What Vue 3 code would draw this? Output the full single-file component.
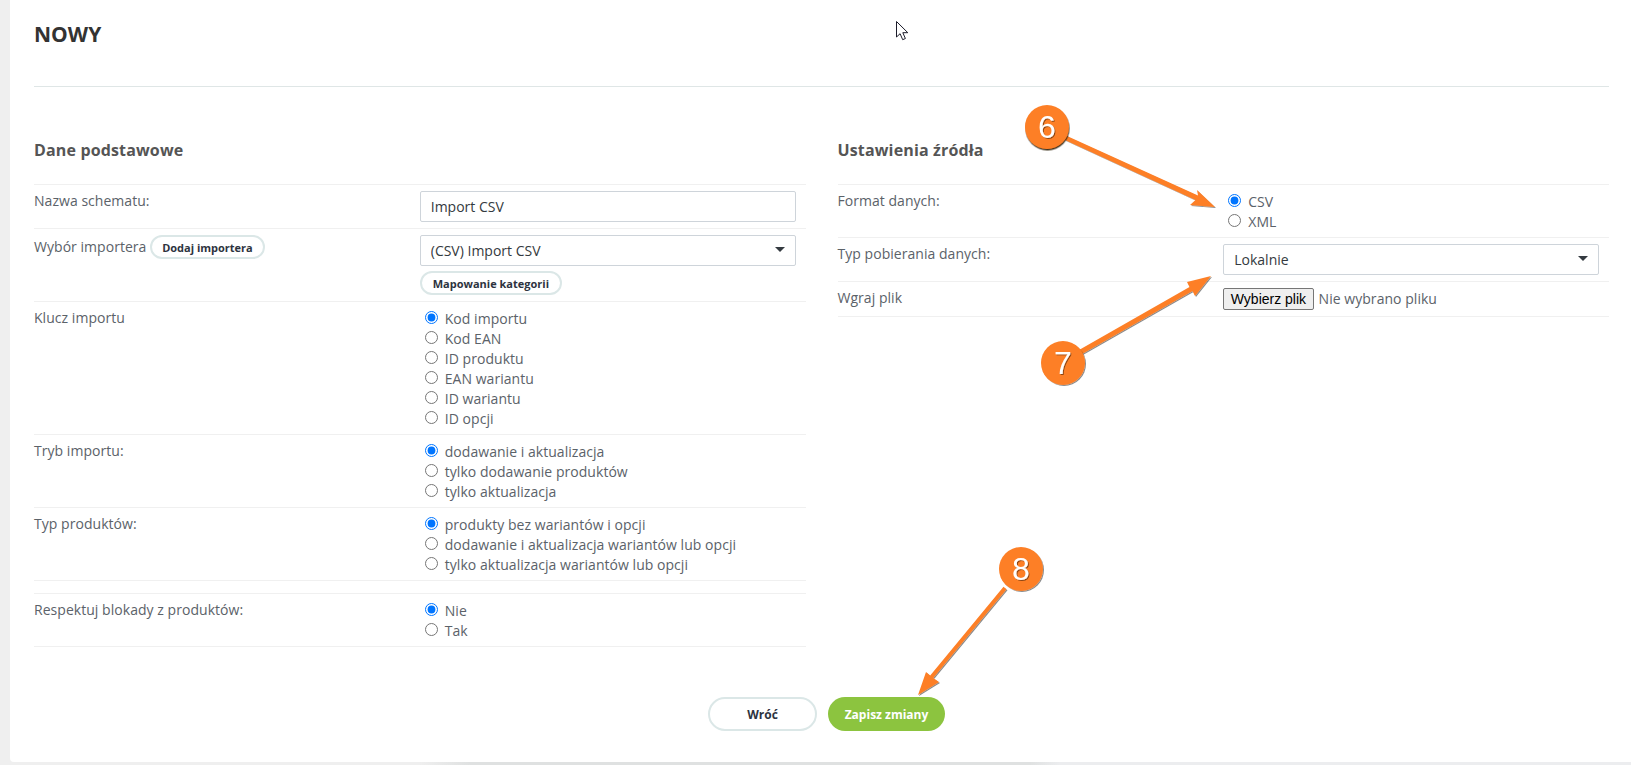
<template>
  <div class="page">
    <main class="card">
      <h1 class="title">NOWY</h1>

      <div class="columns">
        <section>
          <h2>Dane podstawowe</h2>
          <div class="row">
            <div class="label">Nazwa schematu:</div>
            <div class="control"><input class="field" type="text" value="Import CSV" /></div>
          </div>
          <div class="row">
            <div class="label">Wybór importera <button class="pill pill-inline">Dodaj importera</button></div>
            <div class="control">
              <div class="select-wrap"><select class="field"><option>(CSV) Import CSV</option></select></div>
              <button class="pill pill-below">Mapowanie kategorii</button>
            </div>
          </div>
          <div v-for="group in leftGroups" :key="group.name" class="row">
            <div class="label">{{ group.label }}</div>
            <div class="control">
              <label v-for="(opt, i) in group.options" :key="opt" class="radio">
                <input type="radio" :name="group.name" :checked="i === 0" />
                <span>{{ opt }}</span>
              </label>
            </div>
          </div>
          <div class="row"></div>
          <div class="row">
            <div class="label">Respektuj blokady z produktów:</div>
            <div class="control">
              <label class="radio"><input type="radio" name="blokady" checked /><span>Nie</span></label>
              <label class="radio"><input type="radio" name="blokady" /><span>Tak</span></label>
            </div>
          </div>
        </section>

        <section>
          <h2>Ustawienia źródła</h2>
          <div class="row">
            <div class="label">Format danych:</div>
            <div class="control">
              <label class="radio"><input type="radio" name="format" checked /><span>CSV</span></label>
              <label class="radio"><input type="radio" name="format" /><span>XML</span></label>
            </div>
          </div>
          <div class="row">
            <div class="label">Typ pobierania danych:</div>
            <div class="control">
              <div class="select-wrap"><select class="field"><option>Lokalnie</option></select></div>
            </div>
          </div>
          <div class="row">
            <div class="label">Wgraj plik</div>
            <div class="control file">
              <button class="file-btn">Wybierz plik</button>
              <span>Nie wybrano pliku</span>
            </div>
          </div>
        </section>
      </div>

      <div class="actions">
        <button class="btn btn-back">Wróć</button>
        <button class="btn btn-save">Zapisz zmiany</button>
      </div>
    </main>

    <!-- annotations drawn on top of the screenshot -->
    <svg class="overlay" width="1631" height="765" viewBox="0 0 1631 765">
      <defs>
        <filter id="soft" x="-20%" y="-20%" width="140%" height="140%">
          <feDropShadow dx="1" dy="1" stdDeviation="0.6" flood-color="#000" flood-opacity="0.45" />
        </filter>
        <filter id="dark" x="-20%" y="-20%" width="140%" height="140%">
          <feDropShadow dx="0.5" dy="1.5" stdDeviation="0.4" flood-color="#2a1400" flood-opacity="0.9" />
        </filter>
      </defs>
      <path class="cursor" d="M896.5 21.5V37l3.6-3.3 2.6 6 2.7-1.2-2.6-5.8h5z" />
      <g v-for="a in arrows" :key="a.n">
        <polygon class="arrow" :points="a.points" filter="url(#soft)" />
        <circle class="badge" :cx="a.x" :cy="a.y" r="22" :filter="a.n === 6 ? 'url(#dark)' : 'url(#soft)'" />
        <text class="badge-num" :x="a.x" :y="a.y + 11" filter="url(#soft)">{{ a.n }}</text>
      </g>
    </svg>
  </div>
</template>

<script setup>
const leftGroups = [
  {
    name: 'klucz',
    label: 'Klucz importu',
    options: ['Kod importu', 'Kod EAN', 'ID produktu', 'EAN wariantu', 'ID wariantu', 'ID opcji']
  },
  {
    name: 'tryb',
    label: 'Tryb importu:',
    options: ['dodawanie i aktualizacja', 'tylko dodawanie produktów', 'tylko aktualizacja']
  },
  {
    name: 'typ',
    label: 'Typ produktów:',
    options: ['produkty bez wariantów i opcji', 'dodawanie i aktualizacja wariantów lub opcji', 'tylko aktualizacja wariantów lub opcji']
  }
]

const arrows = [
  { n: 6, x: 1047, y: 127, points: '1067,136 1198,195.5 1197,190 1215,207 1190,205 1195.5,200 1065,140' },
  { n: 7, x: 1063, y: 363, points: '1079,350 1189.5,287 1187,282 1211,276 1195,296 1192.5,291 1082,354' },
  { n: 8, x: 1021, y: 569, points: '1003.5,586.7 930.2,675.4 926,672 918,695 939,682 933.2,678 1006.5,589.3' }
]
</script>

<style>
html, body {
  background: #efefef;
}
</style>

<style scoped>
.page {
  position: relative;
  width: 1631px;
  height: 765px;
  overflow: hidden;
  background: linear-gradient(to right, #efefef 420px, #dfe1e1 470px, #dfe1e1 1030px, #ecedef 1060px);
  font-family: "Open Sans", sans-serif;
  font-size: 14px;
  line-height: 20px;
  letter-spacing: 0.04px;
  color: #5b6269;
}
.card {
  margin-left: 10px;
  height: 762px;
  padding: 0 22px 0 24px;
  box-sizing: border-box;
  background: #fff;
  border-bottom-left-radius: 4px;
}
.title {
  height: 87px;
  margin: 0;
  padding-top: 20px;
  box-sizing: border-box;
  border-bottom: 1px solid #dfe6e6;
  font-size: 21px;
  line-height: 28px;
  font-weight: 700;
  color: #333;
}
.columns {
  display: grid;
  grid-template-columns: 1fr 1fr;
  gap: 32px;
}
h2 {
  height: 98px;
  margin: 0;
  padding-top: 51px;
  box-sizing: border-box;
  font-size: 16px;
  line-height: 24px;
  font-weight: 700;
  letter-spacing: 0.15px;
  color: #555;
  border-bottom: 1px solid #f0f0f0;
}
.row {
  display: flex;
  padding: 7px 0 5px;
  border-bottom: 1px solid #f0f0f0;
}
.label {
  flex: 0 0 50%;
  margin-top: -1px;
}
.control {
  flex: 1;
  padding-right: 10px;
  min-width: 0;
}
.field {
  display: block;
  width: 100%;
  height: 31px;
  margin: -1px 0 1px;
  padding: 0 10px;
  box-sizing: border-box;
  border: 1px solid #ced4da;
  border-radius: 2px;
  background: #fff;
  font: inherit;
  color: #343a40;
  appearance: none;
  outline: none;
}
.select-wrap {
  position: relative;
}
.select-wrap::after {
  content: "";
  position: absolute;
  right: 11px;
  top: 12px;
  border-left: 5px solid transparent;
  border-right: 5px solid transparent;
  border-top: 5px solid #343a40;
}
.pill {
  height: 24px;
  padding: 0 10px;
  box-sizing: border-box;
  border: 2px solid #dbe7e7;
  border-radius: 12px;
  background: #fff;
  font-family: inherit;
  font-size: 11px;
  font-weight: 700;
  color: #2d3340;
}
.pill-below {
  display: block;
  margin: 5px 0 1px;
  padding: 0 11px;
}
.radio {
  display: flex;
  height: 20px;
}
.radio input {
  width: 13px;
  height: 13px;
  margin: 2px 7px 0 5px;
}
.file {
  display: flex;
  align-items: center;
  gap: 5px;
  height: 22px;
  margin: -1px 0 1px;
}
.file-btn {
  height: 22px;
  padding: 0 6.5px;
  box-sizing: border-box;
  border: 1px solid #767676;
  border-radius: 2px;
  background: #efefef;
  font-family: "Liberation Sans", Arial, sans-serif;
  font-size: 14px;
  color: #000;
}
.actions {
  display: flex;
  justify-content: center;
  gap: 11px;
  margin-top: 50px;
  padding-left: 10px;
}
.btn {
  height: 34px;
  border-radius: 17px;
  box-sizing: border-box;
  font-family: inherit;
  font-size: 12px;
  font-weight: 700;
}
.btn-back {
  width: 109px;
  border: 2px solid #dbe7e7;
  background: #fff;
  color: #2d3340;
}
.btn-save {
  width: 117px;
  border: none;
  background: #8cc43f;
  color: #fff;
}
.overlay {
  position: absolute;
  left: 0;
  top: 0;
  pointer-events: none;
}
.arrow,
.badge {
  fill: #fd7f26;
}
.badge-num {
  fill: #fff;
  font-family: "Liberation Sans", sans-serif;
  font-size: 32px;
  text-anchor: middle;
}
.cursor {
  fill: #fff;
  stroke: #1c1c2a;
  stroke-width: 1;
}
</style>
